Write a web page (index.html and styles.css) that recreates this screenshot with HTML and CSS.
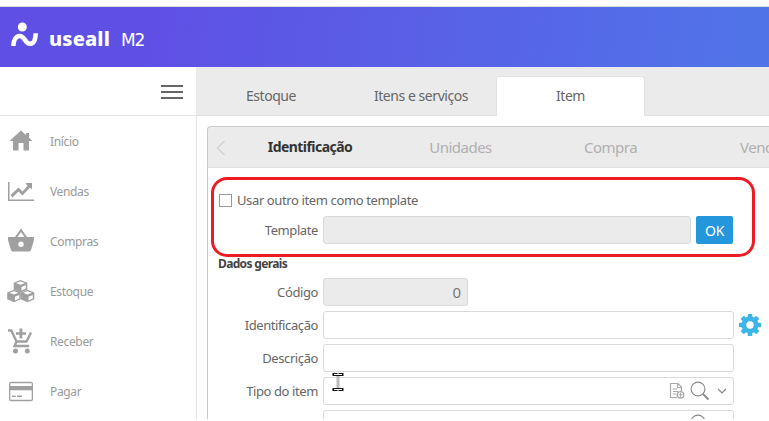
FILE: index.html
```html
<!DOCTYPE html>
<html lang="pt-BR">
<head>
<meta charset="utf-8">
<title>Useall M2</title>
<link rel="stylesheet" href="styles.css">
</head>
<body>
<div class="app">
  <header class="topbar">
    <svg class="logo" width="28" height="26" viewBox="0 0 28 26"><circle cx="12.300" cy="5" r="4.500" fill="#fff"/><path d="M3.400 24C3.600 17 6.500 14 9.800 14C14.800 14 15 21.800 20 21.800C24 21.800 25.500 17.500 25.700 11.200" fill="none" stroke="#fff" stroke-width="4.600"/></svg>
    <span class="brand">useall</span><span class="version">M2</span>
  </header>
  <div class="body">
    <aside class="sidebar">
      <div class="menu-head"><div class="burger"><i></i><i></i><i></i></div></div>
      <nav>
        <a class="nav-item"><svg viewBox="0 0 28 28"><path d="M14 3.500L2.500 14H6v9.500h5.500V16h5v7.500H22V14h3.500L22 10.700V6h-3v2z"/></svg><span>Início</span></a>
        <a class="nav-item"><svg viewBox="0 0 28 28"><path d="M1 5h1.500v17.500H27V24H1z"/><path d="M18.500 6H25v6.500l-2-2-7.500 8-4-4-6 6-2-2.500 8-7.500 4 4 5-5.500z"/></svg><span>Vendas</span></a>
        <a class="nav-item"><svg viewBox="0 0 28 28"><path fill-rule="evenodd" d="M14 1.500l6 8.500h7v3l-3 10q-.5 1.500-2 1.500H6q-1.500 0-2-1.500L1 13v-3h7zM14 5l-3.500 5h7zM14 14.500a2.700 2.700 0 1 0 0 5.400a2.700 2.700 0 0 0 0-5.400z"/></svg><span>Compras</span></a>
        <a class="nav-item"><svg viewBox="0 0 28 28"><g id="cube"><path d="M13.500 3l6.800 2.700v6.800l-6.800 3-6.800-3V5.700z"/><path d="M9 6l4.500-1.600L18 6l-4.500 1.800zM14.500 10l4.300-1.900v3.500l-4.300 2z" fill="#fff"/></g><use href="#cube" x="-6.500" y="9.800"/><use href="#cube" x="7" y="9.800"/></svg><span>Estoque</span></a>
        <a class="nav-item"><svg viewBox="0 0 28 28"><path d="M12.500 1.500h2.800v3.700H19v2.500h-3.700V11.500h-2.800V7.700H9V5.200h3.500z"/><path d="M1 3.500h3.300L9.500 14.500h10l4.500-9M9.500 14.500L7.500 19H22" fill="none" stroke="#a0a0a0" stroke-width="2.300"/><circle cx="8.500" cy="24" r="2.500"/><circle cx="20.300" cy="24" r="2.500"/></svg><span>Receber</span></a>
        <a class="nav-item"><svg viewBox="0 0 28 28"><path fill-rule="evenodd" d="M4 4.800h20q2 0 2 2v15.500q0 2-2 2H4q-2 0-2-2V6.800q0-2 2-2zm-.7 1.500V9h21.400V6.300zm0 7v9.500h21.400v-9.500z"/><path d="M5 18.500h3.800V20H5zm5 0h5V20h-5z"/></svg><span>Pagar</span></a>
      </nav>
    </aside>
    <main class="main">
      <div class="tabs"><div class="tab"><span>Estoque</span></div><div class="tab"><span>Itens e serviços</span></div><div class="tab active"><span>Item</span></div></div>
      <section class="panel">
        <div class="subtabs">
          <svg class="back" width="10" height="16" viewBox="0 0 10 16"><path d="M8.500 1L1.500 8l7 7" fill="none" stroke="#d0d0d0" stroke-width="1.300"/></svg>
          <div class="sub selected"><span>Identificação</span></div><div class="sub"><span>Unidades</span></div><div class="sub"><span>Compra</span></div><div class="sub last"><span>Venda</span></div>
        </div>
        <div class="form">
          <div class="check-row"><span class="box"></span><span class="check-label">Usar outro item como template</span></div>
          <div class="row first"><label>Template</label><div class="input disabled template"></div><button>OK</button></div>
          <h2><span>Dados gerais</span></h2>
          <div class="row"><label>Código</label><div class="input disabled code">0</div></div>
          <div class="row"><label>Identificação</label><div class="input"></div>
            <svg class="gear" width="24" height="24" viewBox="0 0 24 24"><g fill="#3db5e8"><g id="teeth"><rect x="9.700" y="1" width="4.600" height="22" rx=".8"/><rect x="1" y="9.700" width="22" height="4.600" rx=".8"/></g><use href="#teeth" transform="rotate(45 12 12)"/><circle cx="12" cy="12" r="8.500"/></g><circle cx="12" cy="12" r="3.700" fill="#fff"/></svg></div>
          <div class="row"><label>Descrição</label><div class="input"></div></div>
          <div class="row"><label>Tipo do item</label><div class="input lookup">
            <svg width="16" height="18" viewBox="0 0 16 18"><path d="M8 15.500H1.500v-14H9L12.500 5v4M8.500 1.500V5.500h4M4 7h4M4 9.500h5M4 12h3" fill="none" stroke="#aaa" stroke-width="1.200"/><circle cx="11.500" cy="12.800" r="3.200" fill="#fff" stroke="#aaa" stroke-width="1.400"/><path d="M9.500 12.800h4M11.500 10.800v4" stroke="#aaa"/></svg>
            <svg class="lens" width="20" height="20" viewBox="0 0 20 20"><path d="M13 13l5.500 5.500" stroke="#888" stroke-width="1.800"/><circle cx="8" cy="8" r="6.900" fill="none" stroke="#888" stroke-width="1.100"/></svg>
            <svg class="chevron" width="10" height="8" viewBox="0 0 10 8"><path d="M1 2l4 4 4-4" fill="none" stroke="#888" stroke-width="1.200"/></svg></div></div>
          <div class="row"><label></label><div class="input lookup"><svg class="lens cut" width="20" height="20" viewBox="0 0 20 20"><circle cx="8" cy="8" r="6.900" fill="none" stroke="#888" stroke-width="1.100"/></svg></div></div>
        </div>
      </section>
    </main>
  </div>
</div>
<div class="highlight"></div>
<svg class="cursor" width="12" height="19" viewBox="0 0 12 19"><path d="M4.500 2.500h3v13h-3z" fill="#bbb"/><path d="M.5 0h4.500l1 1 1-1h4.500v3H.5zM.5 15h11v3H7l-1-1-1 1H.5z" fill="#111"/><path d="M2 1.500h8M2 16.500h8" stroke="#fff"/></svg>
</body>
</html>
```
FILE: styles.css
```css
* { box-sizing: border-box; }
body { margin: 0; background: #fff; color: #666; font-family: "Noto Sans", sans-serif; font-size: 13px; overflow: hidden; }
.app { width: 769px; height: 419px; padding-top: 6px; overflow: hidden; }
.topbar { height: 61px; border-top: 1px solid #ddd; background: linear-gradient(100deg, #5f50e5 20%, #5075e8 100%); display: flex; color: #fff; padding: 15px 0 0 11px; }
.logo { flex: none; margin-left: -1px; }
.brand { font-size: 20px; line-height: 30px; font-weight: 800; margin-left: 11px; width: 72px; letter-spacing: .15px; margin-top: 2px; }
.version { font-family: "DejaVu Sans", sans-serif; font-size: 17px; line-height: 30px; letter-spacing: -1.2px; margin-top: 3px; }
.body { display: flex; height: 352px; }
.sidebar { width: 196px; flex: none; }
.menu-head { height: 49px; border-bottom: 1px solid #e3e3e3; display: flex; justify-content: flex-end; padding: 18px 13px 0 0; }
.burger { width: 22px; height: 14px; display: flex; flex-direction: column; justify-content: space-between; }
.burger i { height: 2px; background: #666; }
nav { display: flex; flex-direction: column; }
.nav-item { height: 50px; display: flex; align-items: center; gap: 15px; padding-left: 7px; color: #999; font-size: 12px; letter-spacing: -.35px; }
.nav-item svg { width: 28px; height: 28px; fill: #a0a0a0; }
.main { flex: 1; min-width: 0; overflow: hidden; display: flex; flex-direction: column; }
.tabs { height: 49px; flex: none; display: flex; background: #ebebeb; border-bottom: 1px solid #e0e0e0; padding-top: 9px; line-height: 40px; font-size: 14px; letter-spacing: -.45px; }
.tab { width: 150px; text-align: center; white-space: nowrap; }
.active { height: 40px; width: 149px; background: #fff; border: 1px solid #e2e2e2; border-bottom: 0; border-radius: 3px 3px 0 0; line-height: 38px; }
.panel { height: 303px; border-left: 1px solid #e3e3e3; padding: 10px 0 0 10px; }
.subtabs { height: 42px; border: 1px solid #c9c9c9; border-right: 0; border-bottom-color: #e0e0e0; border-radius: 4px 0 0 0; background: #ebebeb; display: flex; font-size: 15px; letter-spacing: -.5px; line-height: 40px; color: #b0b0b0; overflow: hidden; }
.back { flex: none; margin: 13px 0 0 8px; }
.sub { flex: none; width: 150px; text-align: center; }
.sub.selected { margin-left: 2px; width: 164px; color: #333; font-weight: 700; font-size: 14px; letter-spacing: -.55px; }
.sub:nth-child(3) { width: 137px; }
.sub:nth-child(4) { width: 163px; }
.sub.last { text-align: left; padding-left: 48px; }
.form { border-left: 1px solid #c9c9c9; padding: 22px 0 0 10px; height: 270px; }
.check-row { height: 20px; display: flex; align-items: center; gap: 5px; letter-spacing: -.38px; }
.box { width: 13px; height: 13px; border: 1px solid #999; margin-left: 1px; }
.row { height: 28px; margin-bottom: 5px; display: flex; align-items: center; }
.row.first { margin-top: 6px; margin-bottom: 11px; }
.row label { width: 100px; margin-right: 5px; text-align: right; white-space: nowrap; letter-spacing: -.4px; }
.input { width: 411px; height: 28px; background: #fff; border: 1px solid #d9d9d9; border-radius: 3px; }
.disabled { background: #ebebeb; }
.template { width: 368px; }
.code { width: 145px; font-size: 15px; line-height: 27px; text-align: right; padding-right: 6px; color: #777; }
button { width: 37px; height: 28px; margin-left: 5px; padding: 0; border: 0; border-radius: 2px; background: #2496dc; color: #fff; font: 14px "Noto Sans", sans-serif; letter-spacing: -.4px; }
h2 { margin: 0; height: 23px; font-size: 12px; line-height: 17px; letter-spacing: -.65px; color: #444; }
.gear { margin-left: 4px; }
.lookup { display: flex; align-items: center; justify-content: flex-end; padding-right: 6px; }
.lens { margin-left: 5px; }
.chevron { margin-left: 7px; }
.cut { margin-right: 17px; }
.highlight { position: absolute; left: 211px; top: 177px; width: 544px; height: 80px; border: 3px solid #ed1c24; border-radius: 16px; }
.cursor { position: absolute; left: 332px; top: 373px; }
```
